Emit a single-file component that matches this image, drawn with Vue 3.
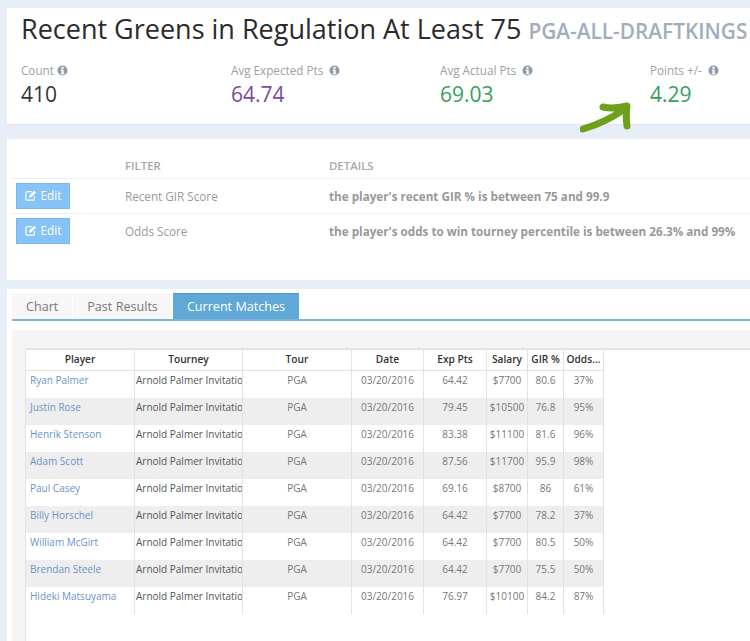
<template>
  <div class="page">
    <section class="card summary">
      <h1>Recent Greens in Regulation At Least 75 <small>PGA-ALL-DRAFTKINGS</small></h1>
      <div class="stats">
        <div v-for="s in stats" :key="s.label" class="stat">
          <div class="stat-label">
            {{ s.label }}
            <svg class="info" :class="{ spaced: s.spaced }" viewBox="0 0 12 12">
              <circle cx="6" cy="6" r="5.5" fill="#8f9bab" />
              <rect x="4.8" y="2" width="2.4" height="2" fill="#fff" />
              <path d="M4.2 5h3v3.6h.8V10H4.2V8.6H5V6.3h-.8z" fill="#fff" />
            </svg>
          </div>
          <div class="stat-value" :class="s.tone">{{ s.value }}</div>
        </div>
      </div>
      <svg class="arrow" viewBox="0 0 60 40">
        <path d="M3 29 C17 25 31 19 46 8 M23 7 C31 9 38 8 47 6 C46 13 46 19 47 26" fill="none" stroke="#6fa01c" stroke-width="7" stroke-linecap="round" stroke-linejoin="round" />
      </svg>
    </section>

    <section class="card filters">
      <div class="filter-row filter-head">
        <div></div>
        <div>FILTER</div>
        <div>DETAILS</div>
      </div>
      <div v-for="f in filters" :key="f.name" class="filter-row">
        <div>
          <button class="edit" type="button">
            <svg viewBox="0 0 14 13" class="edit-icon">
              <path d="M11 7.500V10.500a1.500 1.500 0 0 1-1.500 1.500H2.500A1.500 1.500 0 0 1 1 10.500V3.500A1.500 1.500 0 0 1 2.500 2H8" fill="none" stroke="#fff" stroke-width="1.400" />
              <path d="M5 6.500 10.800 .8 13 3 7.200 8.800 4.800 9z" fill="#fff" />
            </svg>
            Edit
          </button>
        </div>
        <div class="filter-name">{{ f.name }}</div>
        <div class="filter-detail">{{ f.detail }}</div>
      </div>
    </section>

    <section class="card results">
      <div class="tabs">
        <div v-for="t in tabs" :key="t" class="tab" :class="{ active: t === 'Current Matches' }">{{ t }}</div>
      </div>
      <div class="pane">
        <div class="grid">
          <div class="grid-row grid-head">
            <div v-for="c in columns" :key="c" class="cell">{{ c }}</div>
          </div>
          <div v-for="(r, i) in rows" :key="r[0]" class="grid-row" :class="{ odd: i % 2 === 1 }">
            <div class="cell player"><a href="#">{{ r[0] }}</a></div>
            <div class="cell tourney">Arnold Palmer Invitational</div>
            <div class="cell">PGA</div>
            <div class="cell">03/20/2016</div>
            <div class="cell">{{ r[1] }}</div>
            <div class="cell">{{ r[2] }}</div>
            <div class="cell">{{ r[3] }}</div>
            <div class="cell">{{ r[4] }}</div>
          </div>
        </div>
      </div>
    </section>
  </div>
</template>

<script setup>
const stats = [
  { label: "Count", value: "410", tone: "" },
  { label: "Avg Expected Pts", value: "64.74", tone: "purple", spaced: true },
  { label: "Avg Actual Pts", value: "69.03", tone: "green", spaced: true },
  { label: "Points +/-", value: "4.29", tone: "green", spaced: true },
];

const filters = [
  { name: "Recent GIR Score", detail: "the player's recent GIR % is between 75 and 99.9" },
  { name: "Odds Score", detail: "the player's odds to win tourney percentile is between 26.3% and 99%" },
];

const tabs = ["Chart", "Past Results", "Current Matches"];

const columns = ["Player", "Tourney", "Tour", "Date", "Exp Pts", "Salary", "GIR %", "Odds..."];

const rows = [
  ["Ryan Palmer", "64.42", "$7700", "80.6", "37%"],
  ["Justin Rose", "79.45", "$10500", "76.8", "95%"],
  ["Henrik Stenson", "83.38", "$11100", "81.6", "96%"],
  ["Adam Scott", "87.56", "$11700", "95.9", "98%"],
  ["Paul Casey", "69.16", "$8700", "86", "61%"],
  ["Billy Horschel", "64.42", "$7700", "78.2", "37%"],
  ["William McGirt", "64.42", "$7700", "80.5", "50%"],
  ["Brendan Steele", "64.42", "$7700", "75.5", "50%"],
  ["Hideki Matsuyama", "76.97", "$10100", "84.2", "87%"],
];
</script>

<style>
html,
body {
  margin: 0;
  background: #e8eef8;
  overflow: hidden;
}
</style>

<style scoped>
.page {
  width: 750px;
  height: 641px;
  padding: 8px 0 0 7px;
  box-sizing: border-box;
  overflow: hidden;
  font-family: "Open Sans", sans-serif;
  color: #999;
}

.card {
  background: #fff;
  width: 760px;
}

.summary {
  position: relative;
  height: 117px;
  border-bottom: 1px solid #dfe5ee;
  box-sizing: border-box;
  padding: 0 0 0 14px;
}

h1 {
  margin: 0;
  padding-top: 4px;
  font-size: 27px;
  font-weight: 400;
  line-height: 34px;
  color: #2b2b2b;
  white-space: nowrap;
}

h1 small {
  font-size: 20.8px;
  font-weight: 600;
  color: #a3adba;
}

.stats {
  display: grid;
  grid-template-columns: 210px 209px 210px 100px;
  margin-top: 14px;
}

.stat-label {
  font-size: 11.7px;
  line-height: 16px;
  color: #a0a0a0;
  white-space: nowrap;
}

.info {
  width: 11px;
  height: 11px;
  vertical-align: -1px;
}

.info.spaced {
  margin-left: 3px;
}

.stat-value {
  margin-top: 1px;
  font-size: 21px;
  line-height: 30px;
  color: #333;
}

.purple {
  color: #7d4a9e;
}

.green {
  color: #35a05a;
}

.arrow {
  position: absolute;
  left: 573px;
  top: 92px;
  width: 60px;
  height: 40px;
}

.filters {
  margin-top: 14px;
  height: 141px;
  padding: 14px 0 0 4px;
  box-sizing: border-box;
}

.filter-row {
  display: grid;
  grid-template-columns: 114px 204px 1fr;
  height: 35px;
  box-sizing: border-box;
  align-items: center;
  border-top: 1px solid #f0f0f0;
  font-size: 11.7px;
}

.filter-head {
  height: 25px;
  border-top: 0;
  font-weight: 600;
  font-size: 11.4px;
  color: #a8a8a8;
}

.edit {
  display: flex;
  align-items: center;
  justify-content: center;
  gap: 4px;
  margin-left: 5px;
  width: 54px;
  height: 26px;
  padding: 0 0 2px;
  border: 1px solid #78b9f2;
  background: #86c3f6;
  color: #fff;
  font: 400 11.7px "Open Sans", sans-serif;
}

.edit-icon {
  width: 12px;
  height: 11px;
}

.filter-name {
  color: #9a9a9a;
}

.filter-detail {
  font-weight: 700;
  color: #999;
  white-space: nowrap;
}

.results {
  margin-top: 9px;
  padding: 4px 0 0 5px;
  height: 360px;
  box-sizing: border-box;
}

.tabs {
  display: flex;
  height: 28px;
  box-sizing: border-box;
  gap: 1px;
  border-bottom: 2px solid #78b4dc;
}

.tab {
  padding: 0 14px;
  line-height: 28px;
  font-size: 12.6px;
  color: #777;
  background: #f7f7f7;
  height: 26px;
}

.tab.active {
  background: #5fa8d8;
  color: #fff;
  box-shadow: inset 0 1px 0 #4d97cb;
}

.pane {
  margin-top: 9px;
  background: #f5f5f5;
  padding: 18px 0 0 13px;
  height: 320px;
  box-sizing: border-box;
}

.grid {
  background: #fff;
  border-left: 1px solid #e2e2e2;
  border-top: 2px solid #e2e2e2;
  height: 300px;
  font-size: 10px;
}

.grid-row {
  display: grid;
  grid-template-columns: 109px 108px 109px 72px 63px 41px 36px 40px;
  width: 578px;
  height: 27px;
}

.grid-head {
  height: 21px;
  box-sizing: border-box;
  border-bottom: 1px solid #e2e2e2;
  font-weight: 600;
  font-size: 10.2px;
  color: #333;
}

.odd {
  background: #eee;
}

.cell {
  border-right: 1px solid #e2e2e2;
  text-align: center;
  line-height: 18px;
  color: #777;
  overflow: hidden;
  white-space: nowrap;
}

.grid-head .cell {
  color: #333;
}

.player,
.tourney {
  text-align: left;
  padding-left: 4px;
}

.player a {
  color: #6a93c8;
  text-decoration: none;
}

.tourney {
  padding-left: 1px;
  color: #555;
}
</style>
